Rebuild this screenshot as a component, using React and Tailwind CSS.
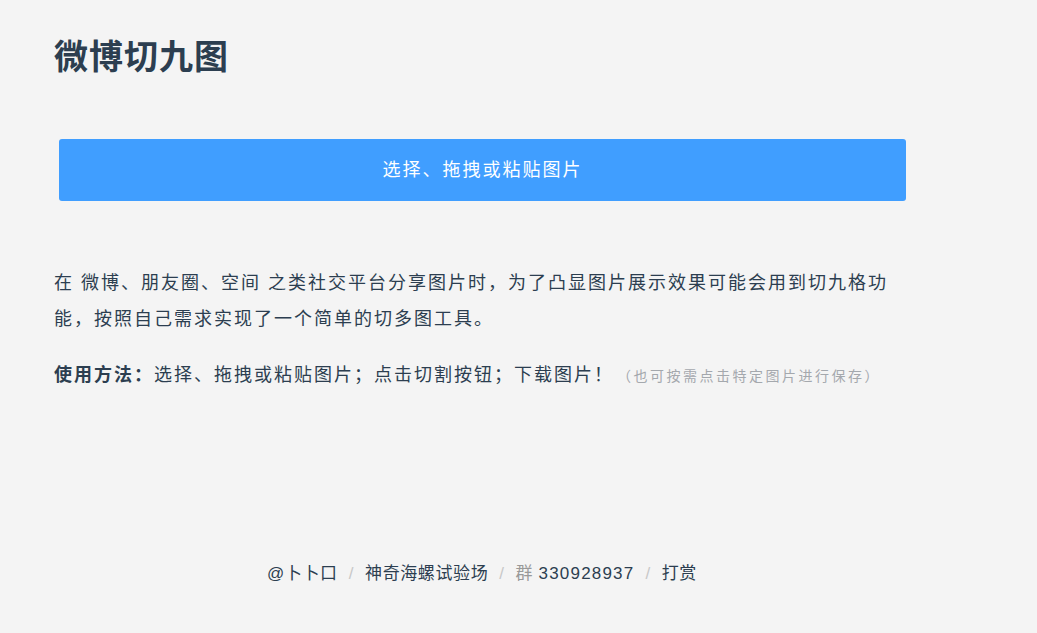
export default function App() {
  return (
    <div className="min-h-screen bg-[#f4f4f4] font-['Liberation_Sans','Noto_Sans_CJK_SC',sans-serif] text-[#2c3e50]">
      <div className="pl-[54px] w-[906px]">
        {/* 标题 */}
        <h1 className="pt-[32px] text-[34px] leading-[50px] font-bold tracking-[1px]">
          微博切九图
        </h1>

        {/* 上传按钮 */}
        <button className="mt-[57px] ml-[5px] w-[847px] h-[62px] rounded-[3px] bg-[#409eff] text-white text-[18px] tracking-[2px]">
          选择、拖拽或粘贴图片
        </button>

        {/* 说明 */}
        <p className="mt-[64px] text-[18px] leading-[36px] tracking-[2px]">
          在 微博、朋友圈、空间 之类社交平台分享图片时，为了凸显图片展示效果可能会用到切九格功能，按照自己需求实现了一个简单的切多图工具。
        </p>
        <p className="mt-[20px] text-[18px] leading-[36px] tracking-[2px]">
          <b className="font-bold">使用方法：</b>
          选择、拖拽或粘贴图片；点击切割按钮；下载图片！
          <span className="ml-[3px] text-[14px] tracking-[2.5px] text-[#a4a8ad]">（也可按需点击特定图片进行保存）</span>
        </p>
      </div>

      {/* 页脚 */}
      <div className="mt-[168px] w-[964px] flex justify-center items-center text-[17px] leading-[24px] tracking-[0.6px] text-[#2c3e50]">
        <span>@卜卜口</span>
        <span className="px-[11px] text-[#c8c8c8]">/</span>
        <span>神奇海螺试验场</span>
        <span className="px-[11px] text-[#c8c8c8]">/</span>
        <span>
          <span className="text-[#999]">群</span> <span className="tracking-[1.2px]">330928937</span>
        </span>
        <span className="px-[11px] text-[#c8c8c8]">/</span>
        <span>打赏</span>
      </div>
    </div>
  );
}
